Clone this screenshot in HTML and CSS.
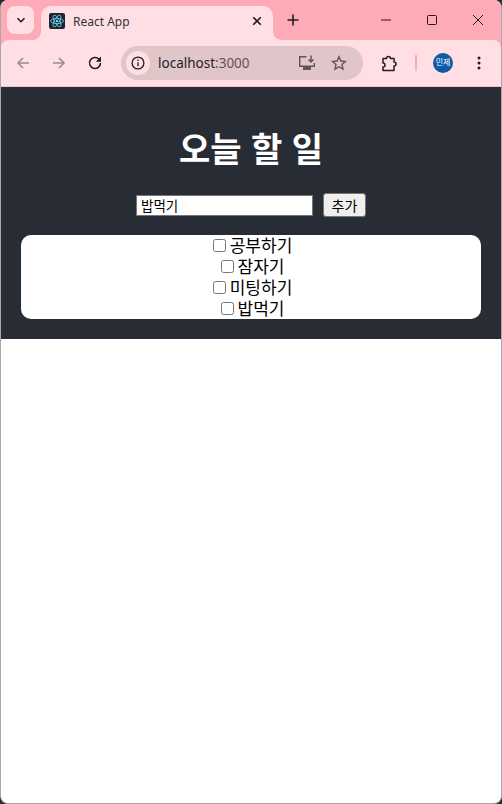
FILE: index.html
```html
<!DOCTYPE html>
<html lang="ko">
<head>
    <meta charset="UTF-8">
    <meta name="viewport" content="width=device-width, initial-scale=1.0">
    <title>React App</title>
    <link rel="stylesheet" href="styles.css">
</head>
<body>
    <div class="window">
        <div class="chrome">
            <div class="tabstrip">
                <div class="tab-search">
                    <svg width="12" height="12" viewBox="0 0 12 12"><path d="M2.500 4.200 6 7.700l3.500-3.500" fill="none" stroke="#1f1f1f" stroke-width="1.600"/></svg>
                </div>
                <div class="tab">
                    <svg class="favicon" width="16" height="16" viewBox="0 0 16 16">
                        <rect width="16" height="16" rx="2" fill="#20232a"/>
                        <g fill="none" stroke="#61dafb" stroke-width="0.800">
                            <ellipse cx="8" cy="8" rx="6.500" ry="2.600"/>
                            <ellipse cx="8" cy="8" rx="6.500" ry="2.600" transform="rotate(60 8 8)"/>
                            <ellipse cx="8" cy="8" rx="6.500" ry="2.600" transform="rotate(120 8 8)"/>
                        </g>
                        <circle cx="8" cy="8" r="1.300" fill="#61dafb"/>
                    </svg>
                    <span class="tab-title">React App</span>
                    <svg class="tab-close" width="10" height="10" viewBox="0 0 10 10"><path d="M1.200 1.200l7.600 7.600M8.800 1.200 1.200 8.800" stroke="#1f1f1f" stroke-width="1.600"/></svg>
                </div>
                <svg class="new-tab" width="12" height="12" viewBox="0 0 12 12"><path d="M6 .5v11M.5 6h11" stroke="#1f1f1f" stroke-width="1.600"/></svg>
                <div class="window-controls">
                    <svg width="10" height="10" viewBox="0 0 10 10"><path d="M0 5h10" stroke="#1f1f1f" stroke-width="1"/></svg>
                    <svg width="10" height="10" viewBox="0 0 10 10"><rect x=".5" y=".5" width="9" height="9" rx="1" fill="none" stroke="#1f1f1f"/></svg>
                    <svg width="10" height="10" viewBox="0 0 10 10"><path d="M0 0l10 10M10 0 0 10" stroke="#1f1f1f"/></svg>
                </div>
            </div>
            <div class="toolbar">
                <svg class="nav-icon" width="16" height="16" viewBox="0 0 16 16"><path d="M14 8H3M8 3 3 8l5 5" fill="none" stroke="#9a8c90" stroke-width="1.600"/></svg>
                <svg class="nav-icon" width="16" height="16" viewBox="0 0 16 16"><path d="M2 8h11M8 3l5 5-5 5" fill="none" stroke="#9a8c90" stroke-width="1.600"/></svg>
                <svg class="nav-icon" width="16" height="16" viewBox="0 0 16 16"><path d="M13.500 8a5.500 5.500 0 1 1-1.600-3.900L13.500 6" fill="none" stroke="#1f1f1f" stroke-width="1.600"/><path d="M14 1.500v5.200H8.800z" fill="#1f1f1f"/></svg>
                <div class="omnibox">
                    <div class="site-info">
                        <svg width="14" height="14" viewBox="0 0 14 14"><circle cx="7" cy="7" r="5.900" fill="none" stroke="#1f1f1f" stroke-width="1.300"/><path d="M7 6.200v4M7 3.600v1.400" stroke="#1f1f1f" stroke-width="1.300"/></svg>
                    </div>
                    <span class="url">localhost<span class="url-port">:3000</span></span>
                    <svg class="omni-install" width="18" height="16" viewBox="0 0 18 16"><path d="M8.500 1.700H1.700v9.600h14.600V8" fill="none" stroke="#5f5558" stroke-width="1.400"/><rect x="5" y="12" width="8" height="3" fill="#5f5558"/><path d="M13 .5v6.500M10.500 4.500 13 7l2.500-2.500" fill="none" stroke="#5f5558" stroke-width="1.500"/></svg>
                    <svg class="omni-star" width="16" height="16" viewBox="0 0 16 16"><path d="M8 1.800l1.900 4.200 4.500.5-3.400 3 1 4.500L8 11.700l-4 2.300 1-4.500-3.400-3 4.500-.5z" fill="none" stroke="#5f5558" stroke-width="1.400"/></svg>
                </div>
                <svg class="ext-icon" width="18" height="18" viewBox="0 0 18 18"><path d="M3 4.500h3.500a2 2 0 0 1 4 0H14v3.500a2 2 0 0 1 0 4v4.500H3V13a2 2 0 0 0 0-4z" fill="none" stroke="#1f1f1f" stroke-width="1.500" stroke-linejoin="round"/></svg>
                <div class="toolbar-sep"></div>
                <div class="avatar">민제</div>
                <svg class="menu-icon" width="4" height="14" viewBox="0 0 4 14"><circle cx="2" cy="2" r="1.500" fill="#1f1f1f"/><circle cx="2" cy="7" r="1.500" fill="#1f1f1f"/><circle cx="2" cy="12" r="1.500" fill="#1f1f1f"/></svg>
            </div>
        </div>

        <div class="App">
            <header class="App-header">
                <h1>오늘 할 일</h1>
                <form class="todo-form">
                    <input class="todo-input" type="text" value="밥먹기">
                    <button class="todo-add" type="button">추가</button>
                </form>
                <ul class="todo-list">
                    <li><input type="checkbox">공부하기</li>
                    <li><input type="checkbox">잠자기</li>
                    <li><input type="checkbox">미팅하기</li>
                    <li><input type="checkbox">밥먹기</li>
                </ul>
            </header>
        </div>
    </div>
</body>
</html>
```

FILE: styles.css
```css
html, body {
    margin: 0;
    height: 100%;
    background-color: #2b2b2b;
}
body {
    font-family: "Liberation Sans", "Noto Sans CJK KR", sans-serif;
    overflow: hidden;
}
.window {
    box-sizing: border-box;
    height: 804px;
    background-color: white;
    border: 1px solid #a8a8a8;
    border-top: none;
    border-radius: 8px;
    overflow: hidden;
}

/* browser chrome */
.chrome {
    background-color: #ffabb7;
}
.tabstrip {
    display: flex;
    align-items: flex-start;
    height: 40px;
    box-sizing: border-box;
    padding-top: 6px;
}
.tab-search {
    display: flex;
    align-items: center;
    justify-content: center;
    width: 27px;
    height: 28px;
    margin-left: 6px;
    background-color: #ffdfe4;
    border-radius: 8px;
}
.tab {
    position: relative;
    display: flex;
    align-items: center;
    width: 232px;
    height: 34px;
    margin-left: 7px;
    padding: 0 11px 4px 8px;
    box-sizing: border-box;
    background-color: #ffdfe4;
    border-radius: 10px 10px 0 0;
}
/* the small flares at the foot of the active tab */
.tab::before, .tab::after {
    content: "";
    position: absolute;
    bottom: 0;
    width: 8px;
    height: 8px;
}
.tab::before {
    left: -8px;
    background: radial-gradient(circle at 0 0, transparent 7.500px, #ffdfe4 8px);
}
.tab::after {
    right: -8px;
    background: radial-gradient(circle at 100% 0, transparent 7.500px, #ffdfe4 8px);
}
.favicon {
    flex: none;
}
.tab-title {
    flex: 1;
    margin-left: 8px;
    font-family: "Noto Sans", "Liberation Sans", sans-serif;
    font-size: 12px;
    color: #333;
}
.new-tab {
    margin: 8px 0 0 14px;
}
.window-controls {
    display: flex;
    align-items: center;
    gap: 36px;
    margin-left: auto;
    margin-top: 9px;
    padding-right: 18px;
}
.toolbar {
    display: flex;
    align-items: center;
    height: 47px;
    padding: 0 15px 0 14px;
    box-sizing: border-box;
    background-color: #ffdfe4;
    border-bottom: 1px solid #e9c6cc;
    border-radius: 8px 8px 0 0;
}
.nav-icon {
    margin-right: 20px;
    flex: none;
}
.omnibox {
    display: flex;
    align-items: center;
    width: 242px;
    height: 34px;
    margin-left: -2px;
    background-color: #e0c5c9;
    border-radius: 17px;
    box-sizing: border-box;
    padding: 0 16px 0 5px;
}
.site-info {
    display: flex;
    align-items: center;
    justify-content: center;
    width: 24px;
    height: 24px;
    background-color: #ffdfe4;
    border-radius: 50%;
}
.url {
    margin-left: 8px;
    flex: 1;
    font-family: "Noto Sans", "Liberation Sans", sans-serif;
    font-size: 13.500px;
    color: #1f1f1f;
}
.url-port {
    color: #5f5558;
}
.omni-star {
    margin-left: 15px;
}
.ext-icon {
    margin-left: 17px;
    flex: none;
}
.toolbar-sep {
    width: 2px;
    height: 16px;
    margin-left: 17px;
    background-color: #ffabb7;
}
.avatar {
    width: 20px;
    height: 20px;
    margin-left: 16px;
    border-radius: 50%;
    background-color: #0b5ba8;
    color: white;
    font-size: 8px;
    line-height: 20px;
    text-align: center;
    flex: none;
}
.menu-icon {
    margin-left: 24px;
    flex: none;
}

/* page */
.App {
    text-align: center;
}
.App-header {
    background-color: #282c34;
    color: white;
    padding: 20px 20px;
    height: 252px;
    box-sizing: border-box;
}
h1 {
    margin: 21px 0 0;
    font-size: 34px;
    line-height: 45px;
    font-weight: bold;
}
.todo-form {
    display: flex;
    justify-content: center;
    align-items: center;
    gap: 10px;
    margin-top: 20px;
}
.todo-input {
    width: 177px;
    height: 21px;
    padding: 0 4px 1px;
    box-sizing: border-box;
    border: 1px solid #767676;
    font-family: inherit;
    font-size: 13.500px;
    background-color: white;
}
.todo-add {
    width: 43px;
    height: 24px;
    padding: 0;
    border: 1px solid #767676;
    border-radius: 3px;
    background-color: #efefef;
    font-family: inherit;
    font-size: 14px;
    color: black;
}
.todo-list {
    list-style: none;
    margin: 18px 0 0;
    padding: 1px 0 0;
    height: 84px;
    box-sizing: border-box;
    background-color: white;
    color: black;
    border-radius: 10px;
    font-size: 17px;
    line-height: 21px;
}
.todo-list input {
    margin: 0 4px 0 3px;
    vertical-align: 0;
}
```
